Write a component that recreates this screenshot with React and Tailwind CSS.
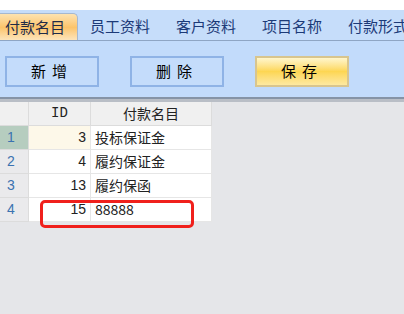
import React from "react";

const tabs = ["付款名目", "员工资料", "客户资料", "项目名称", "付款形式"];

const rows = [
  { n: 1, id: 3, name: "投标保证金" },
  { n: 2, id: 4, name: "履约保证金" },
  { n: 3, id: 13, name: "履约保函" },
  { n: 4, id: 15, name: "88888" },
];

const cjk = { fontFamily: '"Noto Sans CJK SC", "Noto Sans", sans-serif' };

export default function App() {
  return (
    <div className="w-[404px] h-[314px] overflow-hidden bg-white flex flex-col" style={cjk}>
      <div className="h-[10px] bg-white" />

      {/* tab strip */}
      <div className="h-[31px] bg-[#c6ddfa] border-b border-[#8ea5c4] flex items-end whitespace-nowrap overflow-hidden">
        {tabs.map((t, i) =>
          i === 0 ? (
            <div
              key={t}
              className="shrink-0 h-[28px] w-[78px] flex items-center pl-[5px] text-[15px] text-[#1f2b47] rounded-tr-[5px] border-r border-t border-[#a6b8cf] bg-gradient-to-b from-[#fde3b0] via-[#fcc46a] to-[#fde7c0] -mb-px"
            >
              {t}
            </div>
          ) : (
            <div key={t} className="shrink-0 h-[28px] flex items-center pl-[12px] pr-[14px] text-[15px] text-[#1c3a78]">
              {t}
            </div>
          )
        )}
      </div>

      {/* toolbar */}
      <div className="h-[56px] bg-[#c2dbfb] flex items-start pt-[15px] pl-[5px] gap-[31px]">
        <button className="w-[94px] h-[31px] border-2 border-[#8fb3e6] bg-[#c4dcfb] text-[15px] text-black tracking-[6px]">
          新增
        </button>
        <button className="w-[94px] h-[31px] border-2 border-[#8fb3e6] bg-[#c4dcfb] text-[15px] text-black tracking-[6px]">
          删除
        </button>
        <button className="w-[94px] h-[31px] border-2 border-[#d8c58e] bg-gradient-to-b from-[#fff6cc] via-[#fdd652] to-[#fde9a0] text-[15px] text-black tracking-[6px]">
          保存
        </button>
      </div>
      <div className="h-[2px] bg-[#8593a6]" />
      <div className="h-[3px] bg-[#b9bec6]" />

      {/* grid */}
      <div className="flex-1 bg-[#e5e6e9] relative">
        <div className="w-[212px] text-[14px]">
          <div className="flex h-[24px] bg-[#f0f0f0]">
            <div className="w-[29px] border-r border-b border-[#dcdcdc]" />
            <div className="w-[62px] border-r border-b border-[#dcdcdc] flex items-center justify-center text-[#222]" style={{ fontFamily: '"Liberation Mono", monospace' }}>
              ID
            </div>
            <div className="flex-1 border-r border-b border-[#dcdcdc] flex items-center justify-center text-[#222]">
              付款名目
            </div>
          </div>
          {rows.map((r) => (
            <div key={r.n} className="flex h-[24px]">
              <div
                className={`w-[29px] border-r border-b border-[#dcdcdc] flex items-center pl-[7px] text-[#3b72b0] ${
                  r.n === 1 ? "bg-[#b6cdbf]" : "bg-[#eaeaec]"
                }`}
                style={{ fontFamily: '"Liberation Sans", sans-serif' }}
              >
                {r.n}
              </div>
              <div
                className={`w-[62px] border-r border-b border-[#e6e6e6] flex items-center justify-end pr-[4px] text-[#222] ${
                  r.n === 1 ? "bg-[#fdf8e9]" : "bg-white"
                }`}
                style={{ fontFamily: '"Liberation Sans", sans-serif' }}
              >
                {r.id}
              </div>
              <div className="flex-1 border-r border-b border-[#e6e6e6] bg-white flex items-center pl-[4px] text-[#222]">
                {r.name}
              </div>
            </div>
          ))}
        </div>
        {/* red highlight */}
        <div className="absolute left-[40px] top-[98px] w-[154px] h-[28px] border-[3px] border-[#f0201c] rounded-[5px]" />
      </div>
    </div>
  );
}
